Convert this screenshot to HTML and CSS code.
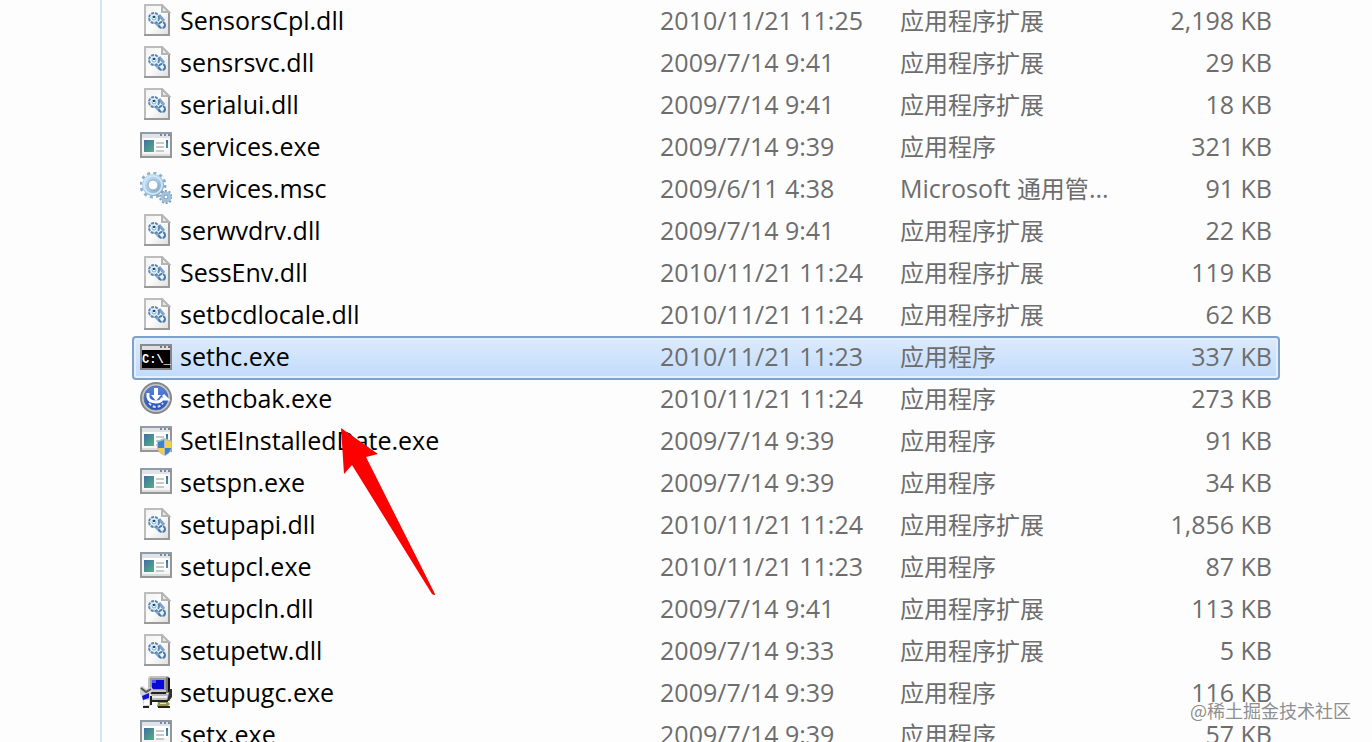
FILE: index.html
```html
<!DOCTYPE html>
<html lang="zh-CN">
<head>
<meta charset="utf-8">
<title>System32</title>
<link rel="stylesheet" href="styles.css">
</head>
<body>
<svg class="sprite" aria-hidden="true">
  <defs>
    <linearGradient id="page" x1="0" y1="0" x2="1" y2="1"><stop offset="0" stop-color="#f2f2f2"/><stop offset=".5" stop-color="#fdfdfd"/><stop offset="1" stop-color="#dedede"/></linearGradient>
    <linearGradient id="pane" x1="0" y1="0" x2="1" y2="1"><stop offset="0" stop-color="#3f6fa8"/><stop offset="1" stop-color="#55b07c"/></linearGradient>
    <linearGradient id="gear" x1="0" y1="0" x2="1" y2="1"><stop offset="0" stop-color="#c3dcee"/><stop offset=".5" stop-color="#a5cbe6"/><stop offset="1" stop-color="#7fa3c2"/></linearGradient>
    <linearGradient id="ball" x1="0" y1="0" x2="0" y2="1"><stop offset="0" stop-color="#5c86d8"/><stop offset="1" stop-color="#2450bd"/></linearGradient>
  </defs>
  <symbol id="dll" viewBox="0 0 32 32">
    <path d="M5 1H22L29 8V31H5Z" fill="url(#page)"/>
    <path d="M5 31V1H22" fill="none" stroke="#bdbdbd" stroke-width="2"/>
    <path d="M29 8V31M4 31H30" fill="none" stroke="#9a9a9a" stroke-width="2"/>
    <path d="M22 1V8H29Z" fill="#e9e9e9" stroke="#b4b4b4" stroke-width="2"/>
    <path d="M15 18l5 5M19 11l5 6" stroke="#7fa6c9" stroke-width="3"/>
    <circle cx="14" cy="14" r="5" fill="#e3f2fb" stroke="#5b87b4" stroke-width="2" stroke-dasharray="3 1"/>
    <circle cx="14" cy="14" r="2" fill="#fff" stroke="#7fa6cb" stroke-width="1"/>
    <path d="M13 12h2v2h-2z" fill="#244c79"/>
    <circle cx="22" cy="21" r="3" fill="#e8f6fd" stroke="#4a7aa9" stroke-width="2" stroke-dasharray="4 1"/>
  </symbol>
  <symbol id="exe" viewBox="0 0 32 32">
    <path d="M1 3H31V27H1Z" fill="#f5f5f5" stroke="#969696" stroke-width="2"/>
    <path d="M2 4H30V8H2Z" fill="#dfe3e8"/><path d="M0 2H32V4H0Z" fill="#919ca8"/>
    <path d="M20 4h2v2h-2zM24 4h2v2h-2zM28 4h2v2h-2z" fill="#7c8a9a"/>
    <path d="M4 8H28V20H4Z" fill="#fff"/><path d="M4 10H14V22H4Z" fill="url(#pane)"/>
    <path d="M16 13h8M16 17h8M16 21h8" stroke="#c5cacd" stroke-width="2"/>
    <path d="M26 10h2v8h-2z" fill="#438da0"/><path d="M26 10h2v3h-2z" fill="#44719d"/>
    <path d="M2 24H30V26H2Z" fill="#ddd"/>
  </symbol>
  <symbol id="msc" viewBox="0 0 32 32">
    <circle cx="13" cy="13" r="12" fill="none" stroke="#8fb0cb" stroke-width="3" stroke-dasharray="3 3.28"/>
    <circle cx="13" cy="13" r="8" fill="none" stroke="url(#gear)" stroke-width="6"/>
    <circle cx="13" cy="13" r="9" fill="none" stroke="#cfe7f6" stroke-width="2"/>
    <circle cx="13" cy="13" r="5" fill="#fcfcfc" stroke="#8aa6bf" stroke-width="1"/>
    <circle cx="26" cy="25" r="6" fill="none" stroke="#7f9cb6" stroke-width="2" stroke-dasharray="2 1.77"/>
    <circle cx="26" cy="25" r="4" fill="#eef6fb" stroke="#9fc0d9" stroke-width="3"/>
    <circle cx="26" cy="25" r="2" fill="#fff" stroke="#6c8dab"/>
  </symbol>
  <symbol id="cmd" viewBox="0 0 32 32">
    <path d="M1 5H31V29H1Z" fill="#000" stroke="#858585" stroke-width="2"/>
    <path d="M2 6H30V10H2Z" fill="#dedede"/><path d="M0 4H32V6H0Z" fill="#858c94"/>
    <path d="M20 6h2v2h-2zM24 6h2v2h-2zM28 6h2v2h-2z" fill="#777"/>
    <text class="prompt" x="2" y="23">C:\_</text>
  </symbol>
  <symbol id="ease" viewBox="0 0 32 32">
    <circle cx="16" cy="16" r="15" fill="#c2c6cc" stroke="#85888d" stroke-width="2"/>
    <circle cx="16" cy="16" r="12" fill="url(#ball)" stroke="#5a6c9e" stroke-width="1"/>
    <path d="M14 6h4v7h3l-5 6-5-6h3z" fill="#fff"/>
    <path d="M8 11v4q1 5 8 5 5 0 6-3h5l-4-4" fill="none" stroke="#fff" stroke-width="3"/>
    <path d="M9 21q3 4 7 4t7-4" fill="none" stroke="#d5e1fb" stroke-width="2" stroke-dasharray="3 2"/>
  </symbol>
  <symbol id="shield" viewBox="0 0 32 32">
    <use href="#exe"/>
    <path d="M24 14l8 3v6q0 6-7 9q-8-3-8-9v-6z" fill="#aebdca"/>
    <path d="M24 16v8h-6v-6z" fill="#3d83c9"/><path d="M25 16l6 2v6h-6z" fill="#f4d044"/>
    <path d="M18 24h6v7q-5-2-6-7z" fill="#f4d044"/><path d="M25 24h6q-1 5-6 7z" fill="#3d83c9"/>
  </symbol>
  <symbol id="setup" viewBox="0 0 32 32">
    <path d="M10 0H28L30 2V16L26 18H10L8 16V2Z" fill="#c3c3c3"/>
    <path d="M26 1h3v16h-3z" fill="#777"/><path d="M28 2h2v14h-2z" fill="#111"/>
    <path d="M10 2H26V14H10Z" fill="#999"/><path d="M12 4H24V13H12Z" fill="#0808d8"/><path d="M12 4h4v3h-4z" fill="#5555f5"/>
    <path d="M10 16h16v2H10z" fill="#222"/>
    <path d="M11 18H28L31 14V22L29 25H12Z" fill="#bbb"/><path d="M30 13h2v8l-3 4h-2z" fill="#333"/>
    <path d="M12 20h15v2H12z" fill="#eee"/><path d="M12 24h16v2H12z" fill="#222"/>
    <path d="M18 26h10l2 2-3 3H17z" fill="#959453"/><path d="M20 27h6v1h-6z" fill="#ece9a0"/><path d="M18 30h12v2H18z" fill="#242414"/>
    <path d="M0 11l3-1 3 3 5-2 2 2-3 6 1 10-3 3H4L2 21 0 18z" fill="#d2d2d2"/>
    <path d="M1 12l5 4 5-3" fill="none" stroke="#555" stroke-width="2"/>
    <path d="M2 20l7-3v5l-6 2z" fill="#1010df"/><path d="M3 30h6v2H3zM10 20h2v9h-2z" fill="#222"/>
    <path d="M4 24h5v5H4z" fill="#fff"/>
  </symbol>
</svg>

<main class="explorer">
  <div class="tree"></div>
  <div class="files">
    <table class="list">
      <colgroup><col class="c-name"><col class="c-date"><col class="c-type"><col class="c-size"></colgroup>
      <tbody>
        <tr><td><div class="name"><svg class="icon"><use href="#dll"/></svg>SensorsCpl.dll</div></td><td>2010/11/21 11:25</td><td><span class="cjk">应用程序扩展</span></td><td>2,198 KB</td></tr>
        <tr><td><div class="name"><svg class="icon"><use href="#dll"/></svg>sensrsvc.dll</div></td><td>2009/7/14 9:41</td><td><span class="cjk">应用程序扩展</span></td><td>29 KB</td></tr>
        <tr><td><div class="name"><svg class="icon"><use href="#dll"/></svg>serialui.dll</div></td><td>2009/7/14 9:41</td><td><span class="cjk">应用程序扩展</span></td><td>18 KB</td></tr>
        <tr><td><div class="name"><svg class="icon"><use href="#exe"/></svg>services.exe</div></td><td>2009/7/14 9:39</td><td><span class="cjk">应用程序</span></td><td>321 KB</td></tr>
        <tr><td><div class="name"><svg class="icon"><use href="#msc"/></svg>services.msc</div></td><td>2009/6/11 4:38</td><td>Microsoft <span class="cjk">通用管</span>...</td><td>91 KB</td></tr>
        <tr><td><div class="name"><svg class="icon"><use href="#dll"/></svg>serwvdrv.dll</div></td><td>2009/7/14 9:41</td><td><span class="cjk">应用程序扩展</span></td><td>22 KB</td></tr>
        <tr><td><div class="name"><svg class="icon"><use href="#dll"/></svg>SessEnv.dll</div></td><td>2010/11/21 11:24</td><td><span class="cjk">应用程序扩展</span></td><td>119 KB</td></tr>
        <tr><td><div class="name"><svg class="icon"><use href="#dll"/></svg>setbcdlocale.dll</div></td><td>2010/11/21 11:24</td><td><span class="cjk">应用程序扩展</span></td><td>62 KB</td></tr>
        <tr class="selected"><td><div class="name"><svg class="icon"><use href="#cmd"/></svg>sethc.exe</div></td><td>2010/11/21 11:23</td><td><span class="cjk">应用程序</span></td><td>337 KB</td></tr>
        <tr><td><div class="name"><svg class="icon"><use href="#ease"/></svg>sethcbak.exe</div></td><td>2010/11/21 11:24</td><td><span class="cjk">应用程序</span></td><td>273 KB</td></tr>
        <tr><td><div class="name"><svg class="icon"><use href="#shield"/></svg>SetIEInstalledDate.exe</div></td><td>2009/7/14 9:39</td><td><span class="cjk">应用程序</span></td><td>91 KB</td></tr>
        <tr><td><div class="name"><svg class="icon"><use href="#exe"/></svg>setspn.exe</div></td><td>2009/7/14 9:39</td><td><span class="cjk">应用程序</span></td><td>34 KB</td></tr>
        <tr><td><div class="name"><svg class="icon"><use href="#dll"/></svg>setupapi.dll</div></td><td>2010/11/21 11:24</td><td><span class="cjk">应用程序扩展</span></td><td>1,856 KB</td></tr>
        <tr><td><div class="name"><svg class="icon"><use href="#exe"/></svg>setupcl.exe</div></td><td>2010/11/21 11:23</td><td><span class="cjk">应用程序</span></td><td>87 KB</td></tr>
        <tr><td><div class="name"><svg class="icon"><use href="#dll"/></svg>setupcln.dll</div></td><td>2009/7/14 9:41</td><td><span class="cjk">应用程序扩展</span></td><td>113 KB</td></tr>
        <tr><td><div class="name"><svg class="icon"><use href="#dll"/></svg>setupetw.dll</div></td><td>2009/7/14 9:33</td><td><span class="cjk">应用程序扩展</span></td><td>5 KB</td></tr>
        <tr><td><div class="name"><svg class="icon"><use href="#setup"/></svg>setupugc.exe</div></td><td>2009/7/14 9:39</td><td><span class="cjk">应用程序</span></td><td>116 KB</td></tr>
        <tr><td><div class="name"><svg class="icon"><use href="#exe"/></svg>setx.exe</div></td><td>2009/7/14 9:39</td><td><span class="cjk">应用程序</span></td><td>57 KB</td></tr>
      </tbody>
    </table>
  </div>
  <svg class="arrow" viewBox="0 0 96 168" aria-hidden="true"><path d="M1 0L38 26L26 29L95 166Q95 168 92 166L12 37L4 46Z" fill="#fe0000"/></svg>
  <div class="watermark">@稀土掘金技术社区</div>
</main>
</body>
</html>
```
FILE: styles.css
```css
* { box-sizing: border-box; }

body {
  margin: 0;
  background: #fdfdfd;
  color: #6d6d6d;
  font: 25px/32px "Open Sans", "Noto Sans CJK SC", sans-serif;
}

.sprite { position: absolute; width: 0; height: 0; }

.prompt {
  fill: #fff;
  font: bold 12px "Liberation Mono", monospace;
}

.explorer {
  position: relative;
  display: flex;
  height: 100vh;
  overflow: hidden;
}

.tree {
  flex: 0 0 102px;
  border-right: 2px solid #d3e5f5;
}

.files {
  flex: 1;
  padding: 0 92px 0 30px;
}

.list {
  width: 100%;
  table-layout: fixed;
  border-collapse: collapse;
}

.c-name { width: 46%; }
.c-date { width: 240px; }
.c-type { width: 20%; }

.list tr { position: relative; }

.list td {
  height: 42px;
  padding: 4px 0 6px;
  vertical-align: top;
  white-space: nowrap;
}

.list td:last-child {
  padding-right: 8px;
  text-align: right;
}

.name {
  display: flex;
  align-items: center;
  gap: 8px;
  padding-left: 8px;
  color: #000;
}

.icon {
  flex: none;
  width: 32px;
  height: 32px;
}

.cjk {
  font-family: "Noto Sans CJK SC", sans-serif;
  font-size: 24px;
  line-height: 24px;
}

.selected { z-index: 0; }

.selected td:first-child::before {
  content: "";
  position: absolute;
  inset: 0 0 -2px;
  z-index: -1;
  border: 2px solid #7da2ce;
  border-radius: 4px;
  background: linear-gradient(#dcebfd, #c1dbfc);
  box-shadow: inset 0 0 0 2px #e3effd;
}

.arrow {
  position: absolute;
  left: 340px;
  top: 428px;
  width: 96px;
  height: 168px;
}

.watermark {
  position: absolute;
  right: 21px;
  bottom: 18px;
  color: #8e8e8e;
  font: 18px/28px "Noto Sans CJK SC", sans-serif;
  text-shadow: 0 0 2px #fff;
}
```
